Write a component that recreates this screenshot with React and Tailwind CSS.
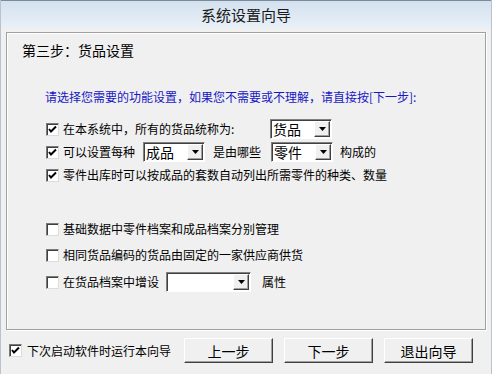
import React from "react";

const font = { fontFamily: '"Noto Sans CJK SC", "Noto Sans", sans-serif' };

function Check({ checked }) {
  return (
    <span className="flex h-[13px] w-[13px] shrink-0 items-center justify-center border border-t-[#7a7a7a] border-l-[#7a7a7a] border-b-[#dcdcdc] border-r-[#dcdcdc] bg-white shadow-[inset_1px_1px_0_#404040]">
      {checked && (
        <svg width="9" height="9" viewBox="0 0 9 9">
          <path d="M1 4 L3 6.5 L8 1.5" fill="none" stroke="#000" strokeWidth="2" />
        </svg>
      )}
    </span>
  );
}

function Combo({ value, width }) {
  return (
    <span
      className={`flex h-[20px] ${width} shrink-0 items-stretch border border-t-[#808080] border-l-[#808080] border-b-white border-r-white bg-white shadow-[inset_1px_1px_0_#404040]`}
    >
      <span className="flex-1 pl-[2px] pt-[1px] text-[14px] leading-[17px] text-black">{value}</span>
      <span className="m-[1px] ml-0 flex w-[16px] items-center justify-center border border-t-white border-l-white border-b-[#404040] border-r-[#404040] bg-[#f0f0f0] shadow-[inset_-1px_-1px_0_#a0a0a0]">
        <svg width="7" height="4" viewBox="0 0 7 4">
          <path d="M0 0 H7 L3.5 4 Z" fill="#000" />
        </svg>
      </span>
    </span>
  );
}

function Row({ checked, children, className = "" }) {
  return (
    <div className={`flex h-[22px] items-center text-[12px] text-black ${className}`}>
      <Check checked={checked} />
      <div className="ml-[4px] flex items-center">{children}</div>
    </div>
  );
}

function Button({ children }) {
  return (
    <button className="flex h-[25px] w-[89px] items-center justify-center border border-t-white border-l-white border-b-[#404040] border-r-[#404040] bg-[#f0f0f0] text-[14px] leading-[18px] text-black shadow-[inset_-1px_-1px_0_#a0a0a0]">
      {children}
    </button>
  );
}

export default function App() {
  return (
    <div
      style={font}
      className="flex h-[374px] w-[492px] flex-col overflow-hidden border-x border-[#b8c3cf] bg-[#f0f0f0]"
    >
      <div className="flex h-[28px] shrink-0 items-center justify-center border-t border-[#7d8a97] bg-gradient-to-b from-[#d3e1ef] to-[#e9f0f7] text-[15px] leading-[18px] text-[#1a1a1a]">
        系统设置向导
      </div>

      <div className="px-[5px] pt-[4px]">
        <div className="h-[298px] border border-[#a0a0a0] pl-[15px] pt-[7px] shadow-[inset_1px_1px_0_#fff,1px_1px_0_#fff]">
          <div className="text-[14px] leading-[20px] text-black">第三步：货品设置</div>

          <div className="ml-[23px] mt-[27px] text-[12px] leading-[20px] text-[#1717c4]">
            请选择您需要的功能设置，如果您不需要或不理解，请直接按[下一步]:
          </div>

          <div className="ml-[24px] mt-[11px] flex flex-col">
            <Row checked>
              <span className="w-[207px]">在本系统中，所有的货品统称为:</span>
              <Combo value="货品" width="w-[62px]" />
            </Row>
            <Row checked className="mt-[1px]">
              <span>可以设置每种</span>
              <span className="ml-[8px]">
                <Combo value="成品" width="w-[62px]" />
              </span>
              <span className="ml-[8px] w-[58px]">是由哪些</span>
              <Combo value="零件" width="w-[62px]" />
              <span className="ml-[7px]">构成的</span>
            </Row>
            <Row checked className="mt-[1px]">
              <span>零件出库时可以按成品的套数自动列出所需零件的种类、数量</span>
            </Row>

            <Row className="mt-[32px]">
              <span>基础数据中零件档案和成品档案分别管理</span>
            </Row>
            <Row className="mt-[4px]">
              <span>相同货品编码的货品由固定的一家供应商供货</span>
            </Row>
            <Row className="mt-[5px]">
              <span>在货品档案中增设</span>
              <span className="ml-[7px]">
                <Combo value="" width="w-[85px]" />
              </span>
              <span className="ml-[11px]">属性</span>
            </Row>
          </div>
        </div>
      </div>

      <div className="mt-[8px] flex items-center pl-[8px] pr-[18px]">
        <Check checked />
        <span className="ml-[5px] text-[12px] leading-[16px] text-black">下次启动软件时运行本向导</span>
        <div className="ml-auto flex gap-[11px]">
          <Button>上一步</Button>
          <Button>下一步</Button>
          <Button>退出向导</Button>
        </div>
      </div>
    </div>
  );
}
